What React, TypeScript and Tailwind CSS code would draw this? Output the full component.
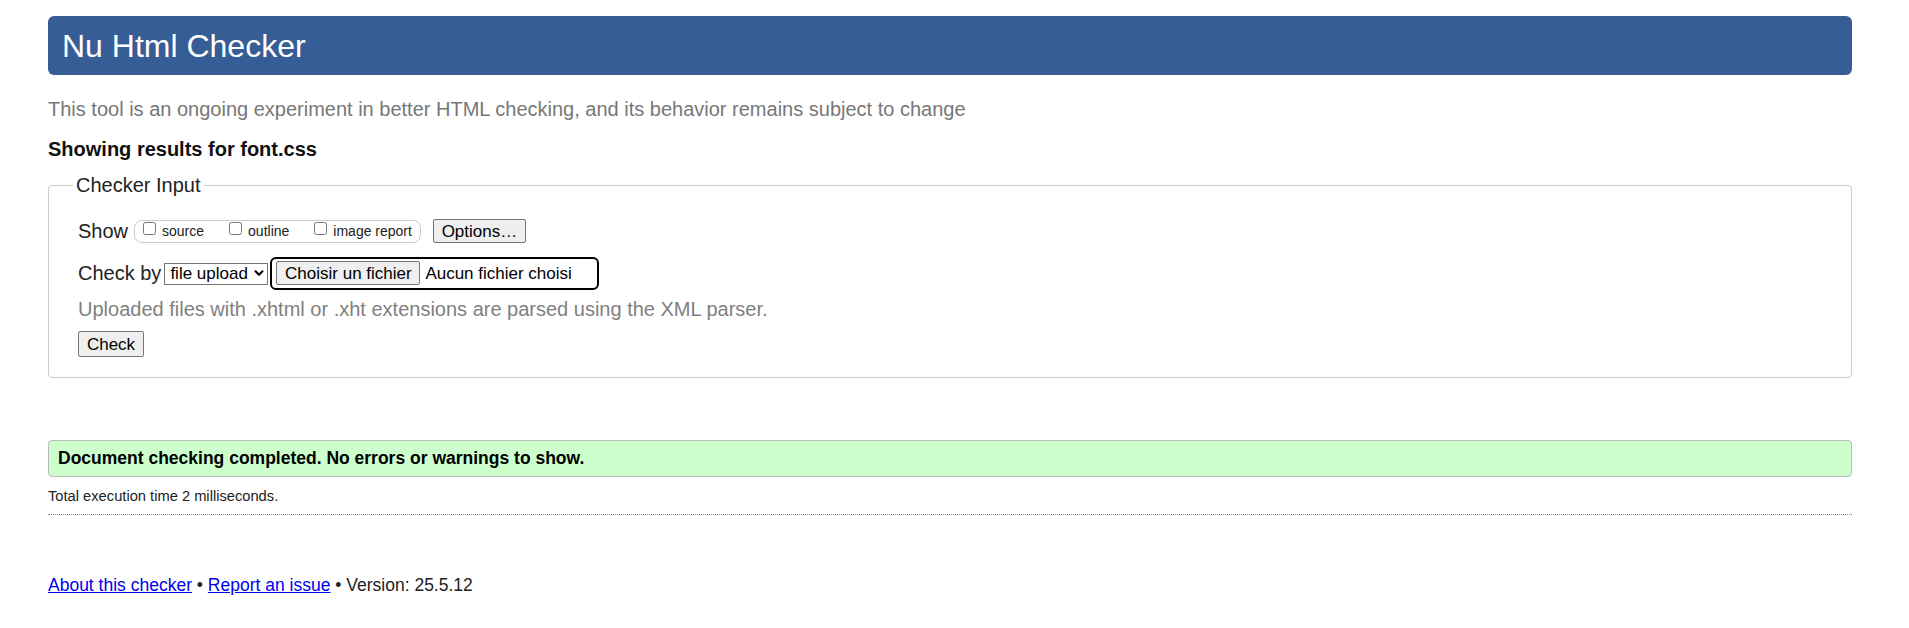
import { ChevronDown } from 'lucide-react';

// checkbox options shown in the "Show" group
const showOptions = [
  { id: 'source', label: 'source' },
  { id: 'outline', label: 'outline' },
  { id: 'image-report', label: 'image report' },
];

export default function App() {
  return (
    <div className="min-h-screen bg-white pl-[48px] pr-[57px] pt-[16px] font-['Liberation_Sans',Arial,sans-serif] text-[#222]">
      {/* Title bar */}
      <h1 className="flex h-[59px] items-center rounded-[6px] bg-[#365d95] pl-[14px] text-[32px] font-normal leading-none text-white">
        Nu Html Checker
      </h1>

      <p className="mt-[23px] text-[20px] leading-[23px] text-[#777]">
        This tool is an ongoing experiment in better HTML checking, and its behavior remains subject to change
      </p>

      <p className="mt-[17px] text-[20px] font-bold leading-[23px] text-[#111]">Showing results for font.css</p>

      {/* Checker input form */}
      <fieldset className="mt-[13px] rounded-[4px] border border-[#ccc] pb-[20px] pl-[24px]">
        <legend className="px-[3px] text-[20px] leading-[23px] text-[#222]">Checker Input</legend>
        <div className="pl-[5px]">
          <div className="mt-[21px] flex h-[26px] items-center">
            <span className="text-[20px] leading-[23px]">Show</span>
            <div className="ml-[6px] flex h-[23px] items-center rounded-[8px] border border-[#ccc] px-[8px] text-[14px] leading-[16px]">
              {showOptions.map((opt, i) => (
                <label key={opt.id} className={`flex items-center ${i > 0 ? 'ml-[25px]' : ''}`}>
                  <input type="checkbox" className="m-0 mb-[6px] h-[13px] w-[13px]" />
                  <span className="ml-[6px]">{opt.label}</span>
                </label>
              ))}
            </div>
            <button
              type="button"
              className="ml-[12px] h-[24px] w-[93px] rounded-[2px] border border-[#767676] bg-[#efefef] text-[17px] leading-none text-black"
            >
              Options…
            </button>
          </div>

          <div className="mt-[12px] flex h-[34px] items-center">
            <span className="text-[20px] leading-[23px]">Check by</span>
            <div className="relative ml-[3px] h-[22px] w-[104px]">
              <select className="h-full w-full appearance-none rounded-none border border-[#767676] bg-white pl-[5px] text-[17px] leading-none text-black">
                <option>file upload</option>
              </select>
              <ChevronDown className="pointer-events-none absolute right-[2px] top-[4px] h-[14px] w-[14px] text-black" strokeWidth={3.5} />
            </div>
            <div className="ml-[2px] flex h-[33px] w-[329px] items-center rounded-[6px] border-2 border-black pl-[4px]">
              <button
                type="button"
                className="h-[24px] w-[144px] rounded-[2px] border border-[#767676] bg-[#efefef] text-[17px] leading-none text-black"
              >
                Choisir un fichier
              </button>
              <span className="ml-[5px] text-[17px] leading-none text-black">Aucun fichier choisi</span>
            </div>
          </div>

          <p className="mt-[8px] text-[20px] leading-[23px] text-[#808080]">
            Uploaded files with .xhtml or .xht extensions are parsed using the XML parser.
          </p>

          <button
            type="button"
            className="mt-[10px] h-[26px] w-[66px] rounded-[2px] border border-[#767676] bg-[#efefef] text-[17px] leading-none text-black"
          >
            Check
          </button>
        </div>
      </fieldset>

      {/* Result */}
      <div className="mt-[62px] flex h-[37px] items-center rounded-[4px] border border-[#bbb] bg-[#ccffcc] pl-[9px]">
        <span className="text-[17.5px] font-bold leading-none text-black">
          Document checking completed. No errors or warnings to show.
        </span>
      </div>

      <p className="mt-[11px] text-[14.7px] leading-[17px] text-[#222]">Total execution time 2 milliseconds.</p>
      <div className="mt-[9px] border-b border-dotted border-[#888]" />

      {/* Footer */}
      <p className="mt-[60px] text-[17.5px] leading-[20px] text-[#222]">
        <a href="#" className="text-[#0000ee] underline">
          About this checker
        </a>{' '}
        •{' '}
        <a href="#" className="text-[#0000ee] underline">
          Report an issue
        </a>{' '}
        • Version: 25.5.12
      </p>
    </div>
  );
}
